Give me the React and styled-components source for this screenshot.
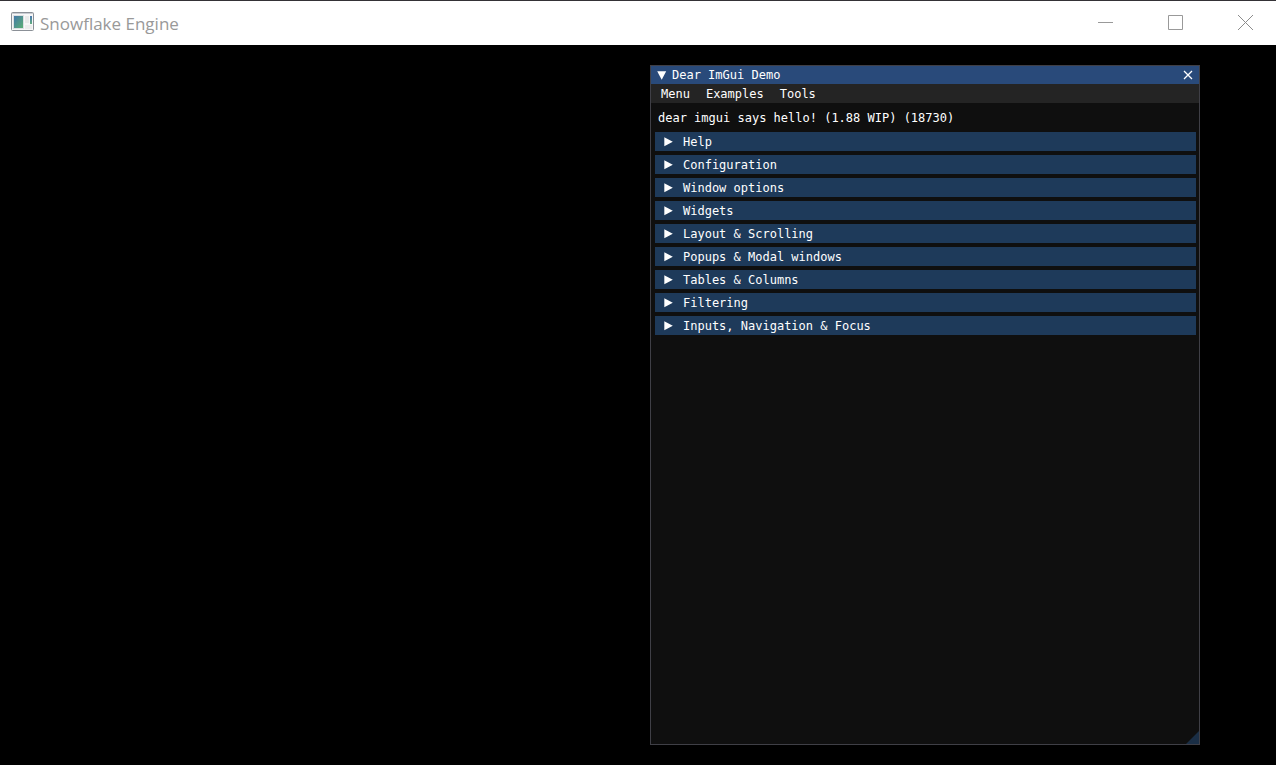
import React, { useState } from "react";
import styled, { createGlobalStyle } from "styled-components";

const Global = createGlobalStyle`
  * { box-sizing: border-box; }
  body { margin: 0; background: #000; }
  button { appearance: none; border: 0; margin: 0; padding: 0; background: none; color: inherit; font: inherit; }
  svg { display: block; flex: none; }
`;

const AppWindow = styled.div`
  display: flex;
  flex-direction: column;
  min-height: 100vh;
  background: #000;
  border-top: 1px solid #343236;
`;

const CaptionBar = styled.header`
  display: flex;
  align-items: center;
  gap: 8px;
  height: 44px;
  padding: 0 0 2px 11px;
  background: #fff;
  color: #999;
`;

const AppTitle = styled.h1`
  flex: 1;
  margin: 4px 0 0 -2px;
  font: 400 17px/24px "Open Sans", "Noto Sans", sans-serif;
`;

const CaptionButton = styled.button`
  display: grid;
  place-items: center;
  width: 62px;
  height: 42px;
`;

const Viewport = styled.main`
  display: flex;
  flex: 1;
  justify-content: flex-end;
  padding: 20px 76px 20px 20px;
`;

const Panel = styled.section`
  position: relative;
  display: flex;
  flex-direction: column;
  width: 550px;
  border: 1px solid #3f3f46;
  background: #0f0f0f;
  color: #fff;
  font: 12px/18px "DejaVu Sans Mono", "Liberation Mono", monospace;
`;

const PanelTitleBar = styled.div`
  display: flex;
  align-items: center;
  height: 18px;
  padding: 0 6px;
  background: #294a7a;
`;

const PanelTitle = styled.h2`
  flex: 1;
  margin: 0 0 0 5px;
  font: inherit;
`;

const MenuBar = styled.nav`
  display: flex;
  height: 19px;
  padding-left: 2px;
  background: #242424;
`;

const MenuButton = styled.button`
  padding: 0 8px;
`;

const PanelBody = styled.div`
  display: flex;
  flex-direction: column;
  gap: 5px;
  padding: 6px 3px 4px 4px;
`;

const Greeting = styled.p`
  margin: 0;
  padding: 0 3px;
`;

const SectionList = styled.div`
  display: flex;
  flex-direction: column;
  gap: 4px;
`;

const SectionHeader = styled.button`
  display: flex;
  align-items: center;
  gap: 10px;
  height: 19px;
  padding-left: 9px;
  background: #1e3a5a;
  text-align: left;
`;

const ResizeGrip = styled.svg`
  position: absolute;
  right: 0;
  bottom: 0;
`;

const sections = [
  "Help",
  "Configuration",
  "Window options",
  "Widgets",
  "Layout & Scrolling",
  "Popups & Modal windows",
  "Tables & Columns",
  "Filtering",
  "Inputs, Navigation & Focus",
];

function AppIcon() {
  return (
    <svg width="23" height="20" viewBox="0 0 23 20" aria-hidden="true">
      <defs>
        <linearGradient id="pane" x1="0" y1="0" x2="1" y2="1">
          <stop offset="0" stopColor="#4478a8" />
          <stop offset="1" stopColor="#5cae74" />
        </linearGradient>
        <linearGradient id="side" x1="0" y1="0" x2="0" y2="1">
          <stop offset="0" stopColor="#4a78b0" />
          <stop offset="1" stopColor="#62ad80" />
        </linearGradient>
      </defs>
      <rect x="0.5" y="0.5" width="22" height="18" rx="1" fill="#f7f7f7" stroke="#8b9097" />
      <path d="M1 1.5h21" stroke="#c9ccd2" />
      <rect x="2.5" y="3.5" width="10" height="13" fill="#fff" stroke="#dcdfe2" />
      <rect x="3" y="4" width="9" height="12" fill="url(#pane)" />
      <rect x="14" y="4" width="4" height="7" fill="#e9e9e9" />
      <rect x="14" y="13" width="7" height="4" fill="#ececec" />
      <rect x="19" y="4" width="2" height="8" fill="url(#side)" />
    </svg>
  );
}

function RightArrow() {
  return (
    <svg width="9" height="10" viewBox="0 0 9 10" aria-hidden="true">
      <path d="M0.3 0.2 8.8 4.7 0.3 9.2Z" fill="#fff" />
    </svg>
  );
}

export default function App() {
  const [selected, setSelected] = useState(null);
  return (
    <>
      <Global />
      <AppWindow>
        <CaptionBar>
          <AppIcon />
          <AppTitle>Snowflake Engine</AppTitle>
          <CaptionButton aria-label="Minimize">
            <svg width="15" height="15" stroke="#999"><path d="M0 7.5h15" /></svg>
          </CaptionButton>
          <CaptionButton aria-label="Maximize">
            <svg width="15" height="15" stroke="#999" fill="none"><path d="M0.5 0.5h14v14h-14z" /></svg>
          </CaptionButton>
          <CaptionButton aria-label="Close">
            <svg width="15" height="15" stroke="#8c8c8c"><path d="M0 0 15 15M15 0 0 15" /></svg>
          </CaptionButton>
        </CaptionBar>
        <Viewport>
          <Panel>
            <PanelTitleBar>
              <svg width="10" height="9" viewBox="0 0 10 9" aria-hidden="true">
                <path d="M0.2 0.3h9L4.7 8.8Z" fill="#fff" />
              </svg>
              <PanelTitle>Dear ImGui Demo</PanelTitle>
              <button aria-label="Close demo">
                <svg width="10" height="10" stroke="#fff" strokeWidth="1.3">
                  <path d="M1 1 9 9M9 1 1 9" />
                </svg>
              </button>
            </PanelTitleBar>
            <MenuBar>
              <MenuButton>Menu</MenuButton>
              <MenuButton>Examples</MenuButton>
              <MenuButton>Tools</MenuButton>
            </MenuBar>
            <PanelBody>
              <Greeting>dear imgui says hello! (1.88 WIP) (18730)</Greeting>
              <SectionList>
                {sections.map((name) => (
                  <SectionHeader key={name} aria-pressed={selected === name} onClick={() => setSelected(name)}>
                    <RightArrow />
                    {name}
                  </SectionHeader>
                ))}
              </SectionList>
            </PanelBody>
            <ResizeGrip width="13" height="13" aria-hidden="true">
              <path d="M13 0V13H0Z" fill="#1a2e45" />
            </ResizeGrip>
          </Panel>
        </Viewport>
      </AppWindow>
    </>
  );
}
